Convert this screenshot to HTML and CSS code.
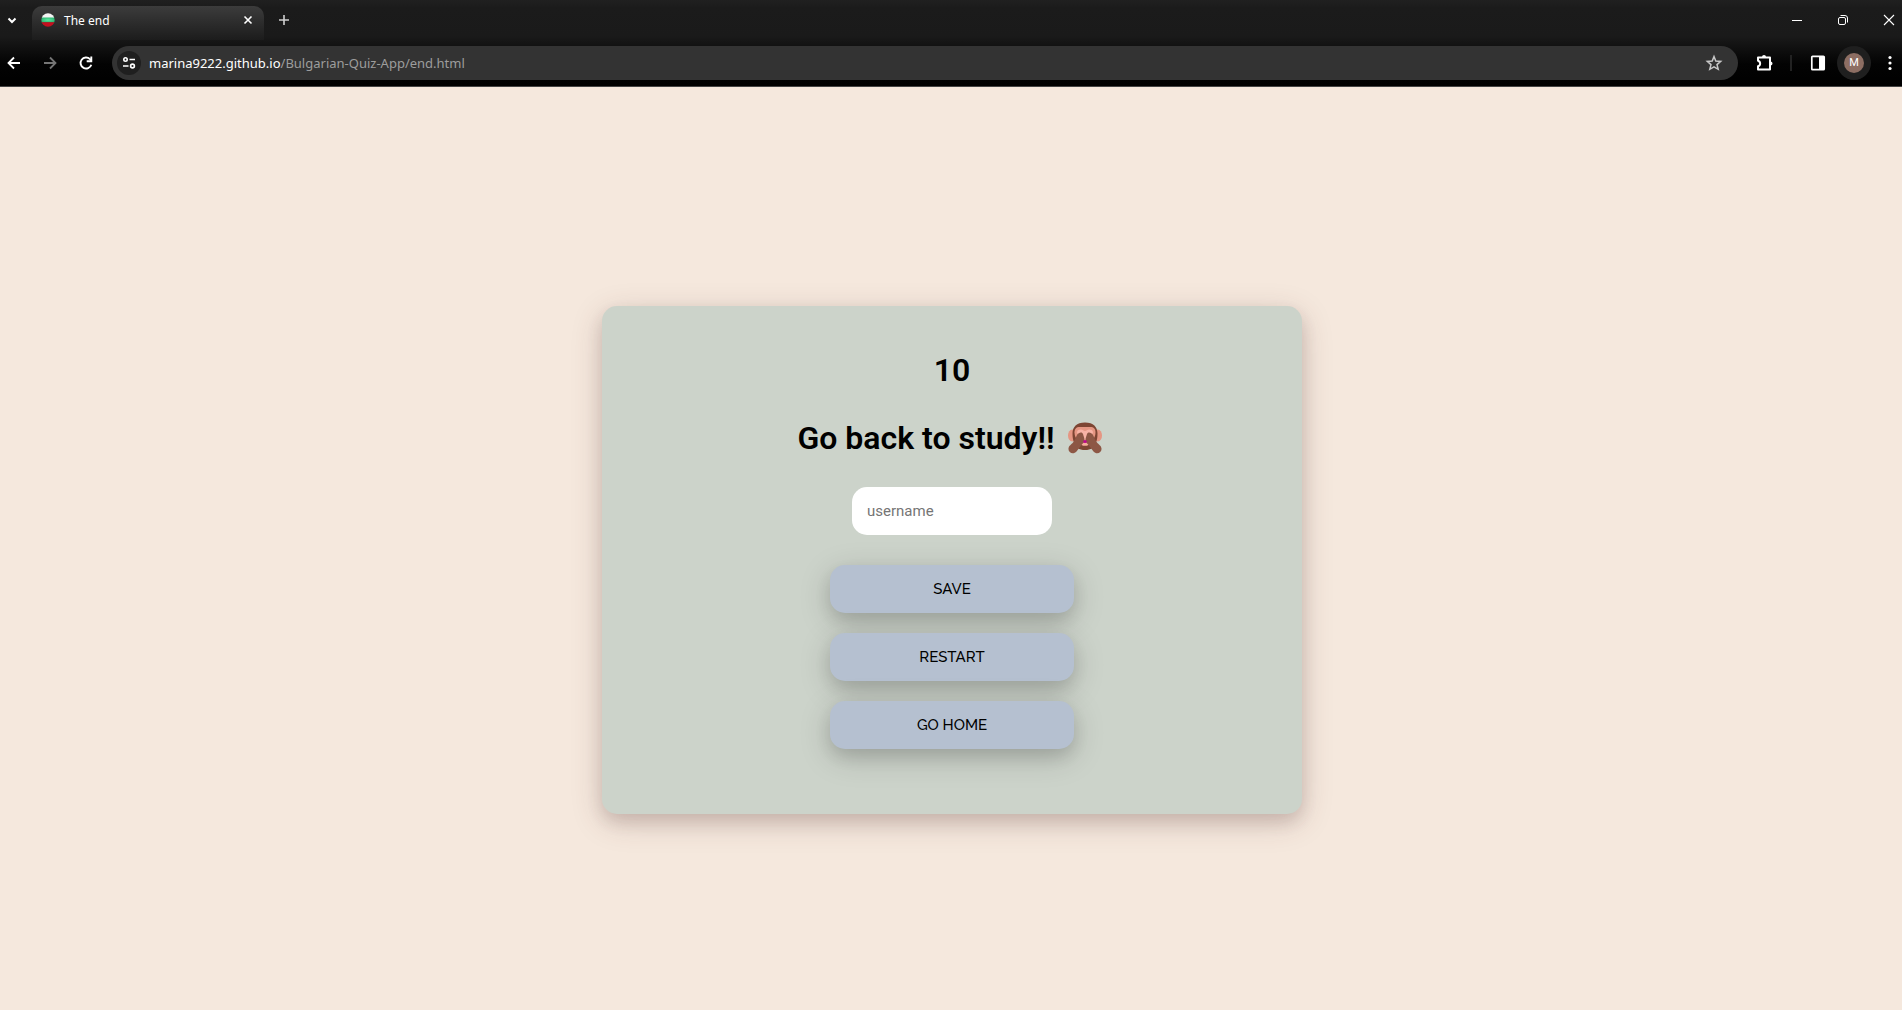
FILE: index.html
```html
<!DOCTYPE html>
<html lang="en">
<head>
<meta charset="utf-8">
<meta name="viewport" content="width=device-width, initial-scale=1">
<title>The end</title>
<link rel="stylesheet" href="styles.css">
</head>
<body>
<header class="browser">
  <div class="tabs">
    <button class="icon-btn tab-search" type="button" aria-label="Search tabs">
      <svg width="24" height="24" viewBox="0 0 24 24" fill="none" stroke="#fff" stroke-width="2"><path d="M8.500 10.500l3.500 3.500 3.500-3.500"/></svg>
    </button>
    <div class="tab">
      <svg class="favicon" width="14" height="14" viewBox="0 0 14 14">
        <defs>
          <clipPath id="disc"><circle cx="7" cy="7" r="6.700"/></clipPath>
          <radialGradient id="green"><stop offset="0" stop-color="#5be8a0"/><stop offset="1" stop-color="#2fb873"/></radialGradient>
        </defs>
        <g clip-path="url(#disc)"><path fill="#f4f4f4" d="M0 0h14v5H0z"/><path fill="url(#green)" d="M0 4.500h14v5H0z"/><path fill="#c4101f" d="M0 9.300h14V14H0z"/></g>
      </svg>
      <span class="tab-title">The end</span>
      <button class="icon-btn" type="button" aria-label="Close tab">
        <svg width="16" height="16" viewBox="0 0 16 16" stroke="#fff" stroke-width="1.600"><path d="M4.500 4.500l7 7M11.500 4.500l-7 7"/></svg>
      </button>
    </div>
    <button class="icon-btn new-tab" type="button" aria-label="New tab">
      <svg width="16" height="16" viewBox="0 0 16 16" stroke="#d0d0d0" stroke-width="1.600"><path d="M8 3v10M3 8h10"/></svg>
    </button>
    <div class="window-controls">
      <button class="icon-btn" type="button" aria-label="Minimize">
        <svg width="12" height="12" viewBox="0 0 12 12" stroke="#fff"><path d="M1 6.500h10"/></svg>
      </button>
      <button class="icon-btn" type="button" aria-label="Restore">
        <svg width="12" height="12" viewBox="0 0 12 12" fill="none" stroke="#fff"><rect x="1.500" y="3.500" width="7" height="7" rx="1.500"/><path d="M3.500 1.500H8A2.500 2.500 0 0 1 10.500 4v4.500"/></svg>
      </button>
      <button class="icon-btn" type="button" aria-label="Close">
        <svg width="12" height="12" viewBox="0 0 12 12" stroke="#fff" stroke-width="1.100"><path d="M1 1l10 10M11 1L1 11"/></svg>
      </button>
    </div>
  </div>
  <div class="toolbar">
    <div class="nav">
      <button class="icon-btn" type="button" aria-label="Back">
        <svg width="16" height="16" viewBox="0 0 16 16" fill="none" stroke="#fff" stroke-width="1.800"><path d="M14 8H3M8 2.500L2.500 8 8 13.500"/></svg>
      </button>
      <button class="icon-btn" type="button" aria-label="Forward">
        <svg width="16" height="16" viewBox="0 0 16 16" fill="none" stroke="#757575" stroke-width="1.800"><path d="M2 8h11M8 2.500L13.500 8 8 13.500"/></svg>
      </button>
      <button class="icon-btn" type="button" aria-label="Reload">
        <svg width="16" height="16" viewBox="0 0 16 16" fill="none" stroke="#fff" stroke-width="1.900"><path d="M13.300 9.700A5.500 5.500 0 1 1 12 4.200l1.500 1.500"/><path d="M13.300 1.500V6.300H8.700"/></svg>
      </button>
    </div>
    <div class="address">
      <button class="icon-btn site-info" type="button" aria-label="Site information">
        <svg width="16" height="16" viewBox="0 0 16 16" fill="none" stroke="#fff" stroke-width="1.600"><circle cx="4.500" cy="4.500" r="1.700"/><path d="M8.500 4.500H14M2 11h5.500"/><circle cx="11.500" cy="11" r="1.900"/></svg>
      </button>
      <span class="url"><span class="host">marina9222.github.io</span>/Bulgarian-Quiz-App/end.html</span>
      <button class="icon-btn" type="button" aria-label="Bookmark">
        <svg width="18" height="18" viewBox="0 0 18 18" fill="none" stroke="#c7c7c7" stroke-width="1.500"><path d="M9 2.600l1.800 4.400 4.900.4-3.700 3.200 1.200 4.700L9 12.800l-4.200 2.500L6 10.600 2.300 7.400 7.200 7z"/></svg>
      </button>
    </div>
    <div class="actions">
      <button class="icon-btn" type="button" aria-label="Extensions">
        <svg width="20" height="20" viewBox="0 0 20 20"><path fill="none" stroke="#fff" stroke-width="2" stroke-linejoin="round" d="M3 4.500h12v12H3v-3.200a2.900 2.900 0 0 0 0-5.600z"/><path fill="#fff" d="M7 4a2 2 0 0 1 4 0zM15.500 8.500a2 2 0 0 1 0 4z"/></svg>
      </button>
      <span class="divider"></span>
      <button class="icon-btn" type="button" aria-label="Side panel">
        <svg width="16" height="16" viewBox="0 0 16 16"><rect x="1.800" y="1.300" width="12.400" height="13.400" rx=".8" fill="none" stroke="#fff" stroke-width="1.700"/><path fill="#fff" d="M9 1h5v14H9z"/></svg>
      </button>
      <button class="icon-btn profile" type="button" aria-label="Profile"><span class="avatar">M</span></button>
      <button class="icon-btn" type="button" aria-label="Menu">
        <svg width="16" height="16" viewBox="0 0 16 16" fill="#fff"><circle cx="8" cy="2.500" r="1.600"/><circle cx="8" cy="8" r="1.600"/><circle cx="8" cy="13.500" r="1.600"/></svg>
      </button>
    </div>
  </div>
</header>
<main class="page">
  <section class="card">
    <h1 class="heading">10</h1>
    <h1 class="heading">Go back to study!!
      <svg class="monkey" width="34" height="32" viewBox="0 0 34 32" role="img" aria-label="See-no-evil monkey">
        <ellipse cx="4.200" cy="13.500" rx="4.200" ry="6" fill="#e59683"/>
        <ellipse cx="29.800" cy="13.500" rx="4.200" ry="6" fill="#e59683"/>
        <path fill="#7d4533" d="M17 .5c8.500 0 12.500 4.500 12.500 11 0 4-.5 6-1.500 9-1.500 5-5 7.500-11 7.500S7.500 25.500 6 20.500c-1-3-1.500-5-1.500-9C4.500 5 8.500.5 17 .5z"/>
        <path fill="#e59683" d="M12 5h10c4 0 5.500 2 5.500 5.500 0 4-2.500 8-5 10H11.500c-2.500-2-5-6-5-10C6.500 7 8 5 12 5z"/>
        <path fill="#f8b3a6" d="M9 10.500c0-2 1.500-3 3.500-3 2.500 0 3 1.500 4.500 1.500s2-1.500 4.500-1.500c2 0 3.500 1 3.500 3L20 19h-6z"/>
        <ellipse cx="17" cy="22" rx="4" ry="1.800" fill="#f4ab9c"/>
        <path fill="#8d5745" d="M9 13c1.500-3 5.500-3.500 6-1 .3 1.500 1.800 4.500 1.500 7-.3 1.500-2 2.500-3 4l-5 6.500c-3 3.500-8.500 1.500-8-3 .3-3 3-4 4.500-6C6.500 18.500 7.500 16 9 13z"/>
        <path fill="#8d5745" d="M25 13c-1.500-3-5.500-3.500-6-1-.3 1.500-1.800 4.500-1.500 7 .3 1.500 2 2.500 3 4l5 6.500c3 3.500 8.500 1.500 8-3-.3-3-3-4-4.500-6-1.500-2-2.500-4.500-4-7.500z"/>
        <ellipse cx="17" cy="19.500" rx="1.800" ry="1.500" fill="#bc088d"/>
      </svg>
    </h1>
    <form class="form">
      <input class="field" type="text" placeholder="username" aria-label="username">
      <button class="btn" type="button">SAVE</button>
      <button class="btn" type="button">RESTART</button>
      <button class="btn" type="button">GO HOME</button>
    </form>
  </section>
</main>
</body>
</html>
```
FILE: styles.css
```css
* {
  box-sizing: border-box;
}

body {
  margin: 0;
  min-height: 100vh;
  display: flex;
  flex-direction: column;
  background: #f5e8dd;
  font-family: Roboto, sans-serif;
}

/* Browser window */
.browser {
  height: 87px;
  border-bottom: 1px solid #444;
  background: linear-gradient(#202020, #1b1b1b 8px, #1a1a1a 36px, #030303 64px, #000);
  font-family: "Noto Sans", sans-serif;
}

.icon-btn {
  display: flex;
  align-items: center;
  justify-content: center;
  padding: 0;
  border: 0;
  background: none;
  font: inherit;
}

.tabs {
  display: flex;
  height: 40px;
}

.tab-search {
  width: 24px;
  margin-right: 8px;
}

.tab {
  display: flex;
  align-items: center;
  width: 232px;
  height: 34px;
  margin-top: 6px;
  padding: 0 8px 6px 9px;
  border-radius: 10px 10px 0 0;
  background: linear-gradient(#3c3c3c, #1c1c1c);
}

.tab-title {
  flex: 1;
  margin-left: 9px;
  color: #fff;
  font-size: 12px;
}

.new-tab {
  width: 40px;
}

.window-controls {
  display: flex;
  gap: 34px;
  margin-left: auto;
  padding-right: 7px;
}

.toolbar {
  display: flex;
  align-items: center;
  height: 46px;
}

.nav {
  display: flex;
  gap: 20px;
  padding: 0 18px 0 6px;
}

.address {
  flex: 1;
  display: flex;
  align-items: center;
  height: 34px;
  padding: 0 15px 0 5px;
  border-radius: 17px;
  background: #333;
}

.site-info {
  width: 24px;
  height: 24px;
  border-radius: 50%;
  background: #1f1f1f;
}

.url {
  flex: 1;
  margin-left: 8px;
  color: #9d9d9d;
  font-size: 13px;
}

.host {
  color: #fff;
}

.actions {
  display: flex;
  align-items: center;
  padding: 0 4px 0 17px;
}

.divider {
  width: 2px;
  height: 16px;
  margin: 0 18px 0 15px;
  background: #222;
}

.profile {
  width: 34px;
  height: 34px;
  margin: 0 11px;
  border-radius: 50%;
  background: #1f1f1f;
}

.avatar {
  width: 20px;
  height: 20px;
  border-radius: 50%;
  background: #8d6e63;
  color: #fff;
  font: 11px/20px Roboto, sans-serif;
}

/* Result page */
.page {
  flex: 1;
  display: flex;
  align-items: center;
  justify-content: center;
  padding: 23px 0 0 2px;
}

.card {
  width: 700px;
  max-width: 100%;
  padding: 45px 32px 65px;
  border-radius: 15px;
  background: #ccd3ca;
  box-shadow: 0 8px 16px rgba(80, 45, 45, .14), 0 8px 32px rgba(80, 45, 45, .2);
}

.heading {
  display: flex;
  align-items: center;
  justify-content: center;
  gap: 13px;
  margin: 0 0 30px;
  font-size: 32px;
  font-weight: 600;
  line-height: 38px;
}

.monkey {
  margin-right: 5px;
}

.form {
  display: flex;
  flex-direction: column;
  align-items: center;
  gap: 20px;
}

.field,
.btn {
  height: 48px;
  border: 0;
  border-radius: 15px;
}

.field {
  width: 200px;
  margin-bottom: 10px;
  padding: 0 15px;
  background: #fff;
  font: 15px Roboto, sans-serif;
}

.field::placeholder {
  color: #757575;
}

.btn {
  width: 244px;
  padding: 0;
  background: #b5c0d0;
  color: #000;
  font: 500 15px Raleway, Lato, sans-serif;
  box-shadow: 0 8px 16px rgba(0, 0, 0, .1), 0 8px 32px rgba(0, 0, 0, .18);
}
```
